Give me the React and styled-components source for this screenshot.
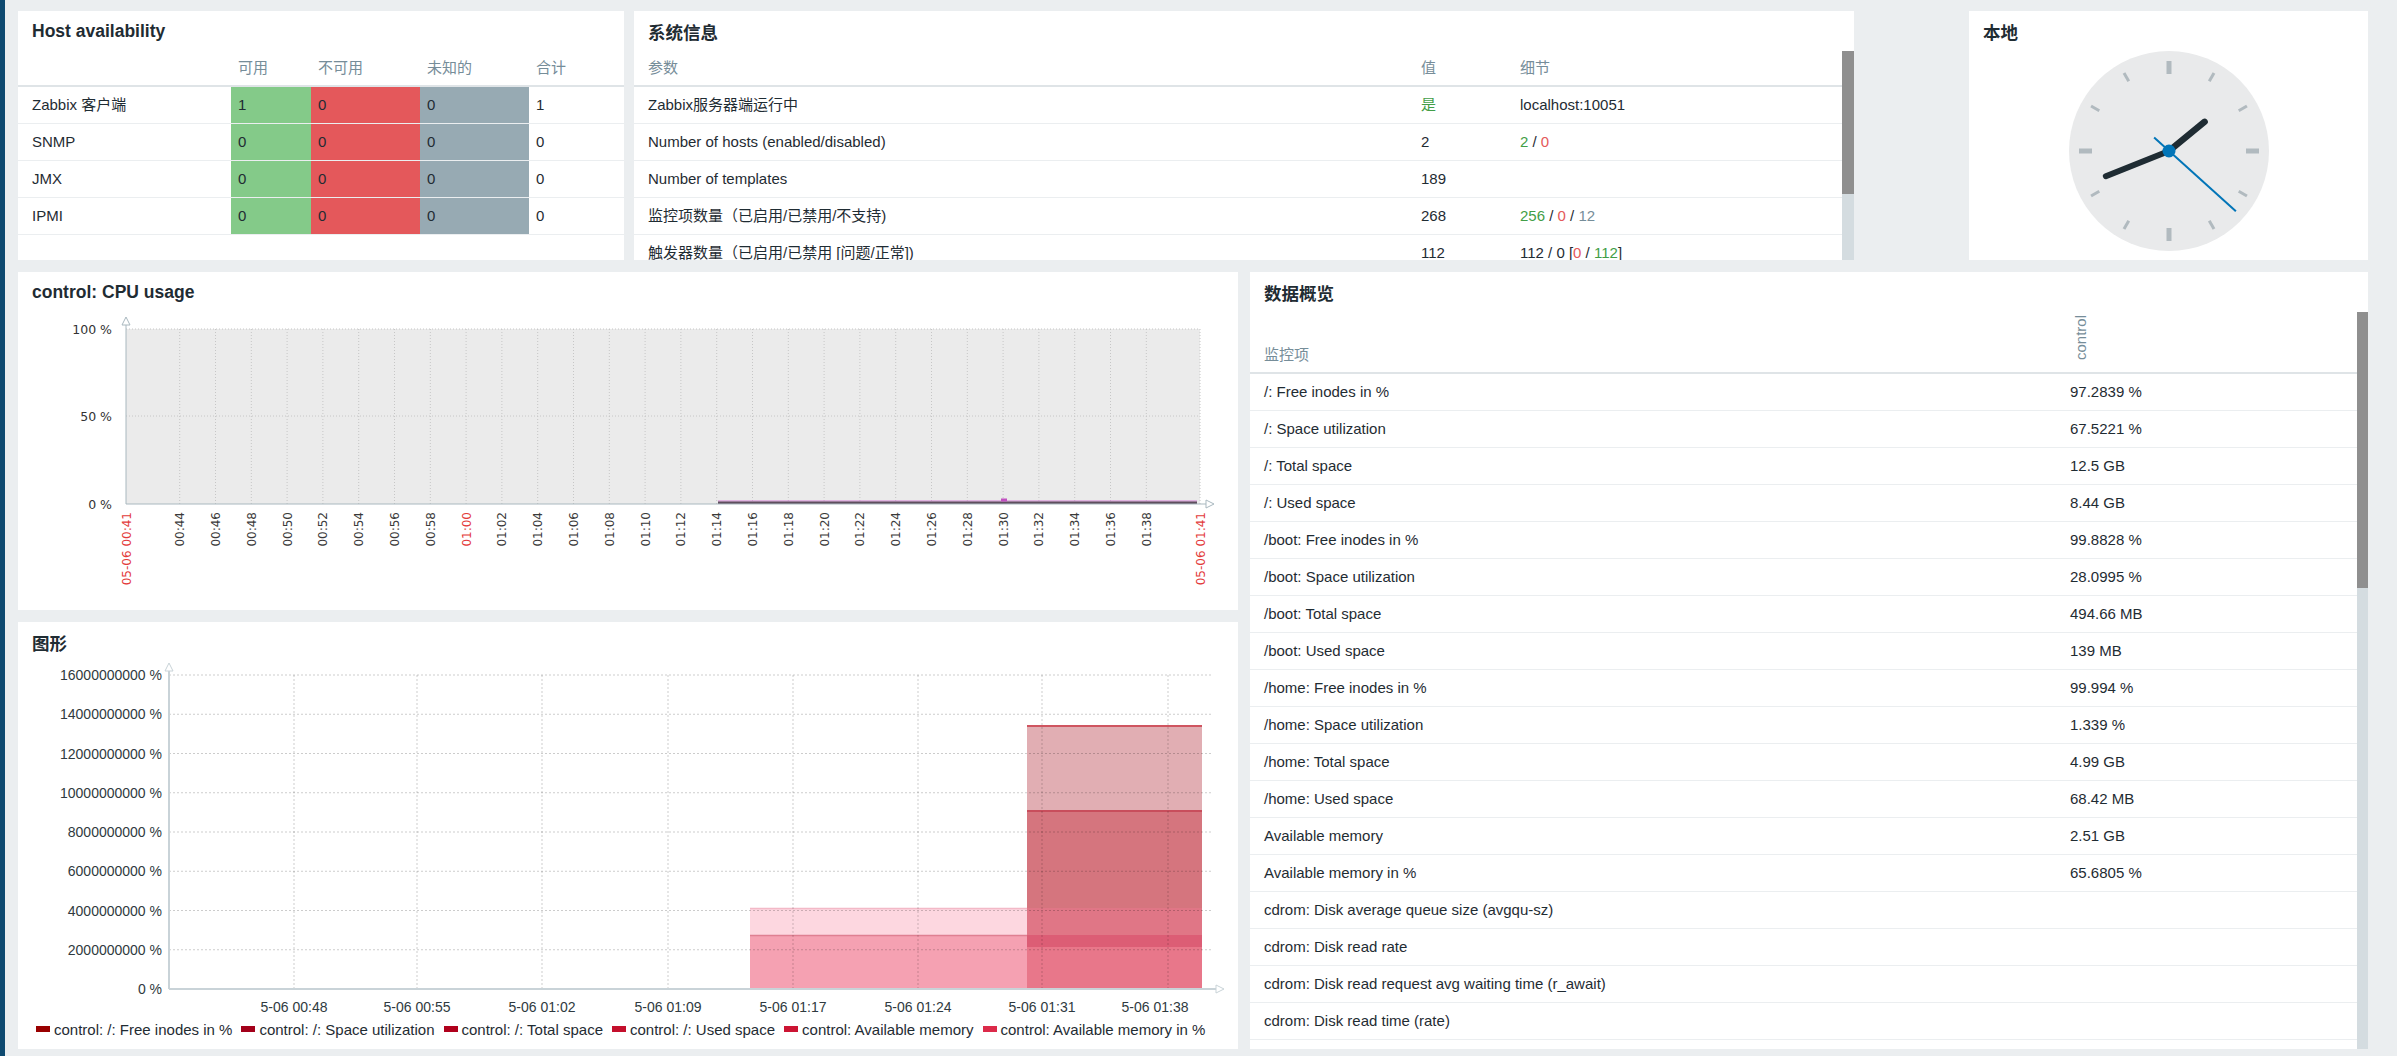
import React from 'react';
import styled, { createGlobalStyle } from 'styled-components';

const GlobalStyle = createGlobalStyle`
  html, body { margin: 0; padding: 0; background: #ebeef0; }
  body {
    font-family: "Liberation Sans", Arial, "Noto Sans CJK SC", sans-serif;
    font-size: 15px;
    color: #1f2c33;
  }
  * { box-sizing: border-box; }
`;

const Page = styled.div`
  display: flex;
  width: 2397px;
  height: 1056px;
  overflow: hidden;
  background: #ebeef0;
`;

const SideEdge = styled.div`
  width: 5px;
  flex: none;
  background: #0e4a70;
`;

const Dashboard = styled.main`
  flex: 1;
  min-width: 0;
  padding: 11px 29px 7px 13px;
  display: flex;
  flex-direction: column;
  gap: 12px;
`;

const TopRow = styled.div`
  display: flex;
  gap: 10px;
  height: 249px;
  flex: none;
`;

const BottomRow = styled.div`
  display: flex;
  gap: 12px;
  height: 777px;
  flex: none;
`;

const Column = styled.div`
  display: flex;
  flex-direction: column;
  gap: 12px;
  width: ${(p) => p.$w}px;
  flex: none;
`;

const Widget = styled.section`
  background: #fff;
  display: flex;
  flex-direction: column;
  overflow: hidden;
  width: ${(p) => (p.$w ? `${p.$w}px` : 'auto')};
  height: ${(p) => (p.$h ? `${p.$h}px` : 'auto')};
  flex: ${(p) => (p.$grow ? '1 1 auto' : 'none')};
  margin-left: ${(p) => (p.$pushRight ? 'auto' : '0')};
`;

const WidgetHead = styled.h2`
  margin: 0;
  height: 40px;
  flex: none;
  display: flex;
  align-items: center;
  padding: 0 14px;
  font-size: 17.5px;
  font-weight: bold;
  color: #1f2c33;
`;

const WidgetBody = styled.div`
  flex: 1;
  min-height: 0;
  display: flex;
  overflow: hidden;
  justify-content: ${(p) => p.$justify || 'flex-start'};
  align-items: ${(p) => p.$align || 'stretch'};
`;

const TableArea = styled.div`
  flex: 1;
  min-width: 0;
  display: flex;
  flex-direction: column;
  overflow: hidden;
`;

const HeadRow = styled.div`
  display: grid;
  grid-template-columns: ${(p) => p.$cols};
  height: ${(p) => p.$h || 36}px;
  border-bottom: 2px solid #dfe4e7;
  align-items: ${(p) => p.$align || 'center'};
  flex: none;
`;

const HeadCell = styled.div`
  padding: 0 7px ${(p) => p.$pb || 0}px ${(p) => p.$pl || 7}px;
  color: #768d99;
  white-space: nowrap;
  line-height: 18px;
  &:first-child { padding-left: 14px; }
`;

const Row = styled.div`
  display: grid;
  grid-template-columns: ${(p) => p.$cols};
  height: 37px;
  border-bottom: 1px solid #ebeef0;
  flex: none;
`;

const Cell = styled.div`
  display: flex;
  align-items: center;
  padding: 0 7px;
  background: ${(p) => p.$bg || 'transparent'};
  white-space: nowrap;
  overflow: hidden;
  line-height: 18px;
  &:first-child { padding-left: 14px; }
`;

const Tone = styled.span`
  color: ${(p) => p.$c};
`;

const ScrollTrack = styled.div`
  width: ${(p) => p.$w}px;
  flex: none;
  background: #d4dce0;
  display: flex;
  flex-direction: column;
`;

const ScrollThumb = styled.div`
  height: ${(p) => p.$h}px;
  background: #8f8f8f;
  flex: none;
`;

const VerticalHead = styled.span`
  writing-mode: vertical-rl;
  transform: rotate(180deg);
  color: #768d99;
  line-height: 15px;
`;

const Legend = styled.div`
  display: flex;
  gap: 9px;
  padding-left: 18px;
  height: 22px;
  flex: none;
  align-items: center;
  font-size: 15px;
  color: #1f2c33;
  white-space: nowrap;
`;

const LegendItem = styled.span`
  display: inline-flex;
  align-items: center;
  gap: 4px;
  &::before {
    content: '';
    width: 14px;
    height: 6px;
    background: ${(p) => p.$c};
  }
`;

const ChartSvg = styled.svg`
  display: block;
  flex: none;
`;

const GraphBody = styled.div`
  flex: 1;
  display: flex;
  flex-direction: column;
  min-height: 0;
`;

/* ---------- data ---------- */

const GREEN = '#429e47';
const RED = '#e45959';
const GREY = '#768d99';

const haCols = '213px 80px 109px 109px 1fr';
const haRows = [
  ['Zabbix 客户端', '1', '0', '0', '1'],
  ['SNMP', '0', '0', '0', '0'],
  ['JMX', '0', '0', '0', '0'],
  ['IPMI', '0', '0', '0', '0'],
];

const sysCols = '780px 99px 1fr';

const doCols = '813px 1fr';
const doRows = [
  ['/: Free inodes in %', '97.2839 %'],
  ['/: Space utilization', '67.5221 %'],
  ['/: Total space', '12.5 GB'],
  ['/: Used space', '8.44 GB'],
  ['/boot: Free inodes in %', '99.8828 %'],
  ['/boot: Space utilization', '28.0995 %'],
  ['/boot: Total space', '494.66 MB'],
  ['/boot: Used space', '139 MB'],
  ['/home: Free inodes in %', '99.994 %'],
  ['/home: Space utilization', '1.339 %'],
  ['/home: Total space', '4.99 GB'],
  ['/home: Used space', '68.42 MB'],
  ['Available memory', '2.51 GB'],
  ['Available memory in %', '65.6805 %'],
  ['cdrom: Disk average queue size (avgqu-sz)', ''],
  ['cdrom: Disk read rate', ''],
  ['cdrom: Disk read request avg waiting time (r_await)', ''],
  ['cdrom: Disk read time (rate)', ''],
];

/* ---------- clock ---------- */

function ClockFace() {
  const c = 100;
  const pt = (deg, r) => {
    const a = (deg * Math.PI) / 180;
    return [c + r * Math.sin(a), c - r * Math.cos(a)];
  };
  const ticks = Array.from({ length: 12 }, (_, i) => {
    const major = i % 3 === 0;
    const [x1, y1] = pt(i * 30, major ? 77 : 80.5);
    const [x2, y2] = pt(i * 30, 90);
    return (
      <line key={i} x1={x1} y1={y1} x2={x2} y2={y2} stroke="#b1babf" strokeWidth={major ? 5 : 3} />
    );
  });
  const hourDeg = 30 * 1 + 41.37 * 0.5;
  const minDeg = 41.37 * 6;
  const secDeg = 22 * 6;
  const [hx, hy] = pt(hourDeg, 46);
  const [mx, my] = pt(minDeg, 68);
  const [sx, sy] = pt(secDeg, 90);
  const [tx, ty] = pt(secDeg + 180, 20);
  return (
    <svg width="200" height="200" viewBox="0 0 200 200">
      <circle cx={c} cy={c} r="100" fill="#e9eaeb" />
      {ticks}
      <line x1={c} y1={c} x2={hx} y2={hy} stroke="#1f2c33" strokeWidth="6.5" strokeLinecap="round" />
      <line x1={c} y1={c} x2={mx} y2={my} stroke="#1f2c33" strokeWidth="6" strokeLinecap="round" />
      <line x1={tx} y1={ty} x2={sx} y2={sy} stroke="#0275b8" strokeWidth="2" />
      <circle cx={c} cy={c} r="6.5" fill="#0275b8" />
    </svg>
  );
}

/* ---------- CPU chart ---------- */

function CpuChart() {
  const x0 = 108;
  const pxMin = 17.9;
  const xr = 1182;
  const top = 17;
  const mid = 104;
  const bot = 192;
  const fmt = (m) => {
    const t = 41 + m;
    const h = Math.floor(t / 60);
    const mm = t % 60;
    return `${String(h).padStart(2, '0')}:${String(mm).padStart(2, '0')}`;
  };
  const ticks = [];
  for (let m = 3; m <= 57; m += 2) ticks.push(m);
  const lbl = (x, text, red, key) => (
    <text
      key={key}
      transform={`translate(${x + 4.5} 200) rotate(-90)`}
      textAnchor="end"
      fontFamily="DejaVu Sans, sans-serif"
      fontSize="12"
      fill={red ? '#e33b3b' : '#3a3a3a'}
    >
      {text}
    </text>
  );
  return (
    <ChartSvg width="1220" height="298" viewBox="0 0 1220 298">
      <rect x={x0} y={top} width={xr - x0} height={bot - top} fill="#ebebeb" />
      {[top, mid].map((y) => (
        <line key={y} x1={x0} y1={y} x2={xr} y2={y} stroke="#c6c6c6" strokeDasharray="1 2" />
      ))}
      {ticks.map((m) => (
        <line
          key={m}
          x1={x0 + m * pxMin}
          y1={top}
          x2={x0 + m * pxMin}
          y2={bot}
          stroke="#c6c6c6"
          strokeDasharray="1 2"
        />
      ))}
      <line x1={xr} y1={top} x2={xr} y2={bot} stroke="#c6c6c6" strokeDasharray="1 2" />
      <line x1={700} y1={189} x2={1179} y2={189} stroke="#d27ad2" strokeWidth="1" />
      <line x1={700} y1={190.8} x2={1179} y2={190.8} stroke="#5e4f5e" strokeWidth="2.6" />
      <rect x={983} y={186.5} width={6} height={3} fill="#c050c0" />
      <line x1={x0} y1={bot} x2={x0} y2={6} stroke="#a9b8bf" />
      <polygon points={`${x0 - 4},13 ${x0},5 ${x0 + 4},13`} fill="#fff" stroke="#a9b8bf" />
      <line x1={x0} y1={bot} x2={1192} y2={bot} stroke="#a9b8bf" />
      <polygon points={`1188,${bot - 4} 1196,${bot} 1188,${bot + 4}`} fill="#fff" stroke="#a9b8bf" />
      {[
        ['100 %', top],
        ['50 %', mid],
        ['0 %', bot],
      ].map(([t, y]) => (
        <text
          key={t}
          x="94"
          y={y}
          textAnchor="end"
          dominantBaseline="central"
          fontFamily="DejaVu Sans, sans-serif"
          fontSize="12.5"
          fill="#333"
        >
          {t}
        </text>
      ))}
      {lbl(x0, '05-06 00:41', true, 'start')}
      {ticks.map((m) => lbl(x0 + m * pxMin, fmt(m), m === 19, m))}
      {lbl(xr, '05-06 01:41', true, 'end')}
    </ChartSvg>
  );
}

/* ---------- SVG graph ---------- */

function BarGraph() {
  const ax = 151;
  const top = 13;
  const bot = 327;
  const step = (bot - top) / 8;
  const right = 1194;
  const vgrid = [276, 399, 524, 650, 775, 900, 1024, 1150];
  const xlabels = [
    [276, '5-06 00:48'],
    [399, '5-06 00:55'],
    [524, '5-06 01:02'],
    [650, '5-06 01:09'],
    [775, '5-06 01:17'],
    [900, '5-06 01:24'],
    [1024, '5-06 01:31'],
    [1137, '5-06 01:38'],
  ];
  const ylabels = Array.from({ length: 9 }, (_, k) => {
    const v = (16 - 2 * k) * 1000000000;
    return [top + k * step, `${v} %`];
  });
  return (
    <ChartSvg width="1220" height="356" viewBox="0 0 1220 356">
      {/* left block */}
      <rect x="732" y="246" width="277" height="27" fill="#fdd7e0" />
      <line x1="732" y1="246.5" x2="1009" y2="246.5" stroke="#f3b9c7" strokeWidth="1.5" />
      <rect x="732" y="273" width="277" height={bot - 273} fill="#f5a1b2" />
      <line x1="732" y1="273.5" x2="1009" y2="273.5" stroke="#df8092" strokeWidth="1.5" />
      {/* right block */}
      <rect x="1009" y="63" width="175" height="85" fill="#e1aeb3" />
      <rect x="1009" y="148" width="175" height="98" fill="#d5757e" />
      <rect x="1009" y="246" width="175" height="27" fill="#e07686" />
      <rect x="1009" y="273" width="175" height="12" fill="#dc5d75" />
      <rect x="1009" y="285" width="175" height={bot - 285} fill="#e8778a" />
      <line x1="1009" y1="64" x2="1184" y2="64" stroke="#cf5560" strokeWidth="2" />
      <line x1="1009" y1="149" x2="1184" y2="149" stroke="#c84e5c" strokeWidth="2" />
      {/* grid */}
      {ylabels.slice(0, 8).map(([y]) => (
        <line key={y} x1={ax} y1={y} x2={right} y2={y} stroke="rgba(0,0,0,0.2)" strokeDasharray="2 2" />
      ))}
      {vgrid.map((x) => (
        <line key={x} x1={x} y1={top} x2={x} y2={bot} stroke="rgba(0,0,0,0.2)" strokeDasharray="2 2" />
      ))}
      {/* axes */}
      <line x1={ax} y1={bot} x2={ax} y2={3} stroke="#c9d3d8" strokeWidth="2" />
      <polygon points={`${ax - 4},9 ${ax},1 ${ax + 4},9`} fill="#fff" stroke="#c9d3d8" />
      <line x1={ax} y1={bot} x2={1202} y2={bot} stroke="#c9d3d8" strokeWidth="2" />
      <polygon points={`1198,${bot - 4} 1206,${bot} 1198,${bot + 4}`} fill="#fff" stroke="#c9d3d8" />
      {ylabels.map(([y, t]) => (
        <text
          key={t}
          x="144"
          y={y}
          textAnchor="end"
          dominantBaseline="central"
          fontFamily="Liberation Sans, Arial, sans-serif"
          fontSize="14"
          fill="#2f3a40"
        >
          {t}
        </text>
      ))}
      {xlabels.map(([x, t]) => (
        <text
          key={t}
          x={x}
          y="345"
          textAnchor="middle"
          dominantBaseline="central"
          fontFamily="Liberation Sans, Arial, sans-serif"
          fontSize="14"
          fill="#2f3a40"
        >
          {t}
        </text>
      ))}
    </ChartSvg>
  );
}

const legendItems = [
  ['#990000', 'control: /: Free inodes in %'],
  ['#a3001a', 'control: /: Space utilization'],
  ['#b0001c', 'control: /: Total space'],
  ['#c40f2c', 'control: /: Used space'],
  ['#cc1433', 'control: Available memory'],
  ['#dc2a4a', 'control: Available memory in %'],
];

export default function App() {
  return (
    <>
      <GlobalStyle />
      <Page>
        <SideEdge />
        <Dashboard>
          <TopRow>
            <Widget $w={606} $h={249}>
              <WidgetHead>Host availability</WidgetHead>
              <WidgetBody>
                <TableArea>
                  <HeadRow $cols={haCols}>
                    <HeadCell />
                    <HeadCell>可用</HeadCell>
                    <HeadCell>不可用</HeadCell>
                    <HeadCell>未知的</HeadCell>
                    <HeadCell>合计</HeadCell>
                  </HeadRow>
                  {haRows.map((r) => (
                    <Row key={r[0]} $cols={haCols}>
                      <Cell>{r[0]}</Cell>
                      <Cell $bg="#84ca89">{r[1]}</Cell>
                      <Cell $bg="#e4585b">{r[2]}</Cell>
                      <Cell $bg="#97aab3">{r[3]}</Cell>
                      <Cell>{r[4]}</Cell>
                    </Row>
                  ))}
                </TableArea>
              </WidgetBody>
            </Widget>

            <Widget $w={1220} $h={249}>
              <WidgetHead>系统信息</WidgetHead>
              <WidgetBody>
                <TableArea>
                  <HeadRow $cols={sysCols}>
                    <HeadCell>参数</HeadCell>
                    <HeadCell>值</HeadCell>
                    <HeadCell>细节</HeadCell>
                  </HeadRow>
                  <Row $cols={sysCols}>
                    <Cell>Zabbix服务器端运行中</Cell>
                    <Cell><Tone $c={GREEN}>是</Tone></Cell>
                    <Cell>localhost:10051</Cell>
                  </Row>
                  <Row $cols={sysCols}>
                    <Cell>Number of hosts (enabled/disabled)</Cell>
                    <Cell>2</Cell>
                    <Cell>
                      <Tone $c={GREEN}>2</Tone>&nbsp;/&nbsp;<Tone $c={RED}>0</Tone>
                    </Cell>
                  </Row>
                  <Row $cols={sysCols}>
                    <Cell>Number of templates</Cell>
                    <Cell>189</Cell>
                    <Cell />
                  </Row>
                  <Row $cols={sysCols}>
                    <Cell>监控项数量（已启用/已禁用/不支持)</Cell>
                    <Cell>268</Cell>
                    <Cell>
                      <Tone $c={GREEN}>256</Tone>&nbsp;/&nbsp;<Tone $c={RED}>0</Tone>&nbsp;/&nbsp;
                      <Tone $c={GREY}>12</Tone>
                    </Cell>
                  </Row>
                  <Row $cols={sysCols}>
                    <Cell>触发器数量（已启用/已禁用 [问题/正常])</Cell>
                    <Cell>112</Cell>
                    <Cell>
                      112 / 0 [<Tone $c={RED}>0</Tone>&nbsp;/&nbsp;<Tone $c={GREEN}>112</Tone>]
                    </Cell>
                  </Row>
                </TableArea>
                <ScrollTrack $w={12}>
                  <ScrollThumb $h={143} />
                </ScrollTrack>
              </WidgetBody>
            </Widget>

            <Widget $w={399} $h={249} $pushRight>
              <WidgetHead>本地</WidgetHead>
              <WidgetBody $justify="center" $align="flex-start">
                <ClockFace />
              </WidgetBody>
            </Widget>
          </TopRow>

          <BottomRow>
            <Column $w={1220}>
              <Widget $h={338}>
                <WidgetHead>control: CPU usage</WidgetHead>
                <WidgetBody>
                  <CpuChart />
                </WidgetBody>
              </Widget>
              <Widget $h={427}>
                <WidgetHead>图形</WidgetHead>
                <GraphBody>
                  <BarGraph />
                  <Legend>
                    {legendItems.map(([c, t]) => (
                      <LegendItem key={t} $c={c}>
                        {t}
                      </LegendItem>
                    ))}
                  </Legend>
                </GraphBody>
              </Widget>
            </Column>

            <Widget $grow $h={777}>
              <WidgetHead>数据概览</WidgetHead>
              <WidgetBody>
                <TableArea>
                  <HeadRow $cols={doCols} $h={62} $align="end">
                    <HeadCell $pb={8}>监控项</HeadCell>
                    <HeadCell $pb={8} $pl={10}>
                      <VerticalHead>control</VerticalHead>
                    </HeadCell>
                  </HeadRow>
                  {doRows.map(([n, v]) => (
                    <Row key={n} $cols={doCols}>
                      <Cell>{n}</Cell>
                      <Cell>{v}</Cell>
                    </Row>
                  ))}
                </TableArea>
                <ScrollTrack $w={11}>
                  <ScrollThumb $h={276} />
                </ScrollTrack>
              </WidgetBody>
            </Widget>
          </BottomRow>
        </Dashboard>
      </Page>
    </>
  );
}
